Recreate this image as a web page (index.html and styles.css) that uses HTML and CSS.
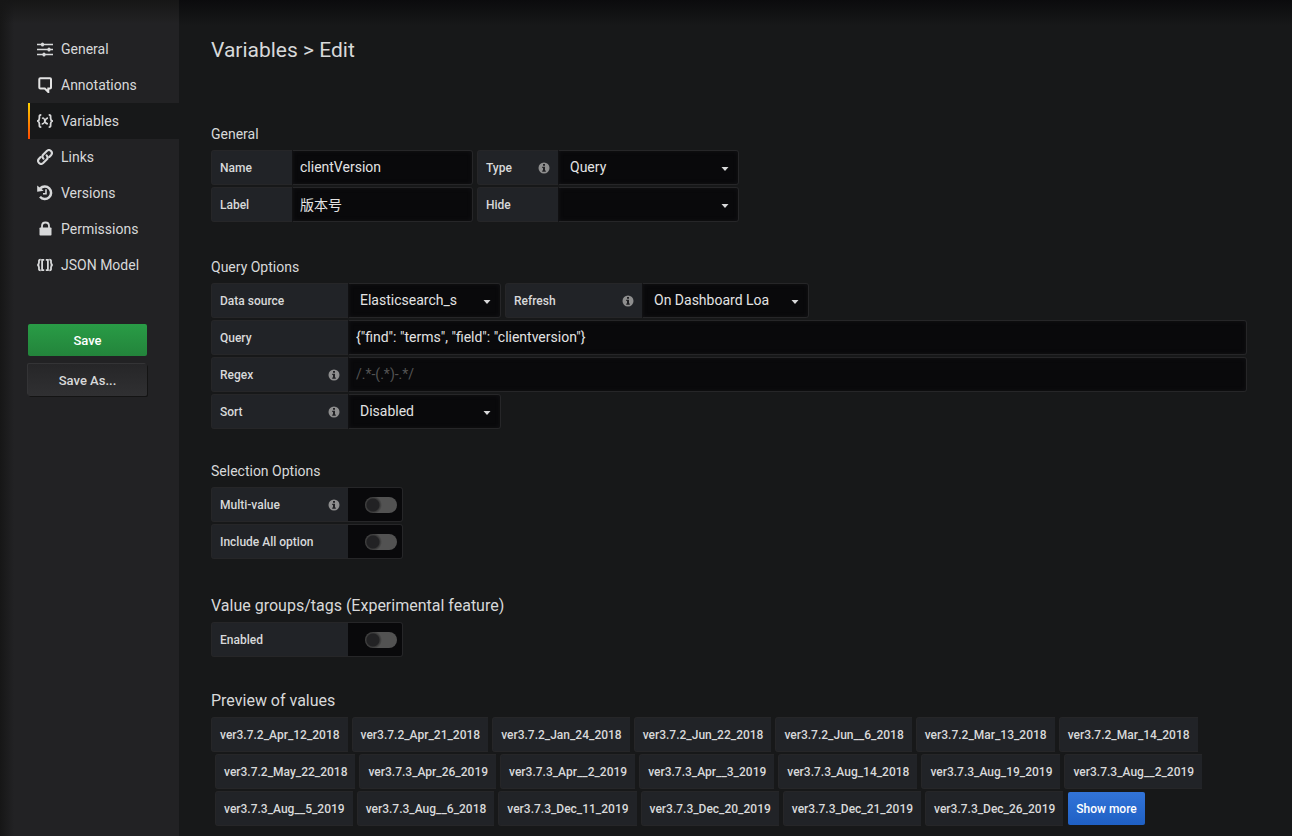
FILE: index.html
```
<!DOCTYPE html>
<html lang="en">
<head>
<meta charset="utf-8">
<title>Variables</title>
<link rel="stylesheet" href="styles.css">
</head>
<body>
<svg class="defs" aria-hidden="true">
  <symbol id="info" viewBox="0 0 12 12"><circle cx="6" cy="6" r="5.500" fill="#8e8e8e"/><path d="M5 2h2v1.700H5zM4.200 4.700H7v3.700h.8v1.300H4.200V8.400H5V6h-.8z" fill="#212124"/></symbol>
  <symbol id="caret" viewBox="0 0 8 4"><path d="M.5 0h7L4 4z" fill="#d8d9da"/></symbol>
</svg>
<div class="settings">
  <aside class="sidebar">
    <nav class="nav">
      <a class="nav-item" href="#general"><svg class="nav-icon" viewBox="0 0 16 16"><path d="M0 3.500h16M0 8.500h16M0 13.500h16" stroke="#d8d9da" stroke-width="1.400"/><path d="M5.500 3v1M12 8v1M7 13v1" stroke="#d8d9da" stroke-width="3" stroke-linecap="round"/></svg>General</a>
      <a class="nav-item" href="#annotations"><svg class="nav-icon" viewBox="0 0 16 16"><path d="M3.300 1.200h9.700q1 0 1 1v8.300q0 1-1 1h-1.700v3.500l-3.500-3.500H3.300q-1 0-1-1V2.200q0-1 1-1z" fill="none" stroke="#e3e3e3" stroke-width="2"/></svg>Annotations</a>
      <a class="nav-item active" href="#variables"><svg class="nav-icon" viewBox="0 0 16 16"><g fill="none" stroke="#d8d9da"><path d="M4.300 1.800C2 1.800 2.400 3 2.400 5S2.200 7.500.5 8c1.700.5 1.900 1 1.900 3s-.4 3.200 1.900 3.200M11.700 1.800c2.300 0 1.900 1.200 1.900 3.200s.2 2.500 1.900 3c-1.700.5-1.900 1-1.900 3s.4 3.200-1.900 3.200" stroke-width="1.800"/><path d="M5 5.500Q7 4 7.700 7.500T11 10.800M11 5Q9 5 8 8T4.700 11" stroke-width="1.400"/></g></svg>Variables</a>
      <a class="nav-item" href="#links"><svg class="nav-icon" viewBox="0 0 16 16"><g fill="none" stroke="#d8d9da" stroke-width="2.100" stroke-linecap="round"><path d="M6.400 9.700C5 8 5.200 6.500 6.300 5.400L9.800 2c2.900-2.600 6.800 1.200 4.200 4.200L12.300 8"/><path d="M9.600 6.300c1.400 1.700 1.200 3.200.1 4.300L6.200 14c-2.900 2.600-6.800-1.200-4.200-4.200L3.700 8"/></g></svg>Links</a>
      <a class="nav-item" href="#versions"><svg class="nav-icon" viewBox="0 0 16 16"><path d="M3.200 3.400A6.300 6.300 0 1 1 3 11.800" fill="none" stroke="#d8d9da" stroke-width="2.500"/><path d="M.2.500v6.300l6.500-1z" fill="#d8d9da"/><path d="M9 4.300v4.400H6" fill="none" stroke="#d8d9da" stroke-width="1.600"/></svg>Versions</a>
      <a class="nav-item" href="#permissions"><svg class="nav-icon" viewBox="0 0 16 16"><rect x="2.500" y="6.500" width="12" height="8" rx=".8" fill="#d8d9da"/><path d="M5 7V5c0-4.700 7-4.700 7 0v2" fill="none" stroke="#d8d9da" stroke-width="1.800"/></svg>Permissions</a>
      <a class="nav-item" href="#json"><svg class="nav-icon" viewBox="0 0 16 16"><g fill="none" stroke="#d8d9da" stroke-width="1.800"><path d="M3.700 2.700C1.500 2.700 2 4 2 5.500S1.800 7.700.4 8C1.800 8.300 2 9 2 10.500s-.5 2.800 1.700 2.800M12.300 2.700c2.200 0 1.700 1.300 1.700 2.800s.2 2.200 1.600 2.500c-1.400.3-1.600 1-1.600 2.500s.5 2.800-1.700 2.800"/><path d="M7.200 2.800H5.100v10.400h2.100M8.800 2.800h2.100v10.400H8.800"/></g></svg>JSON Model</a>
    </nav>
    <div class="actions">
      <button class="btn save" type="button">Save</button>
      <button class="btn save-as" type="button">Save As...</button>
    </div>
  </aside>

  <main class="content">
    <h1 class="title">Variables &gt; Edit</h1>
    <form>
      <section class="group general">
        <h2 class="heading">General</h2>
        <div class="row">
          <div class="field"><label class="label short" for="name">Name</label><input class="input medium" id="name" type="text" value="clientVersion"></div>
          <div class="field"><label class="label short" for="type">Type<svg class="info"><use href="#info"/></svg></label><div class="select medium"><select class="input" id="type"><option>Query</option></select><svg class="caret"><use href="#caret"/></svg></div></div>
        </div>
        <div class="row">
          <div class="field"><label class="label short" for="label">Label</label><input class="input medium" id="label" type="text" value="版本号"></div>
          <div class="field"><label class="label short" for="hide">Hide</label><div class="select medium"><select class="input" id="hide"><option></option></select><svg class="caret"><use href="#caret"/></svg></div></div>
        </div>
      </section>

      <section class="group query">
        <h2 class="heading">Query Options</h2>
        <div class="row">
          <div class="field"><label class="label" for="source">Data source</label><div class="select small"><select class="input" id="source"><option>Elasticsearch_s</option></select><svg class="caret"><use href="#caret"/></svg></div></div>
          <div class="field"><label class="label" for="refresh">Refresh<svg class="info"><use href="#info"/></svg></label><div class="select refresh"><select class="input" id="refresh"><option>On Dashboard Loa</option></select><svg class="caret"><use href="#caret"/></svg></div></div>
        </div>
        <div class="row"><div class="field grow"><label class="label" for="query">Query</label><input class="input" id="query" type="text" value="{&quot;find&quot;: &quot;terms&quot;, &quot;field&quot;: &quot;clientversion&quot;}"></div></div>
        <div class="row"><div class="field grow"><label class="label" for="regex">Regex<svg class="info"><use href="#info"/></svg></label><input class="input" id="regex" type="text" placeholder="/.*-(.*)-.*/"></div></div>
        <div class="row"><div class="field"><label class="label" for="sort">Sort<svg class="info"><use href="#info"/></svg></label><div class="select small"><select class="input" id="sort"><option>Disabled</option></select><svg class="caret"><use href="#caret"/></svg></div></div></div>
      </section>

      <section class="group selection">
        <h2 class="heading">Selection Options</h2>
        <div class="row"><div class="field"><label class="label" for="multi">Multi-value<svg class="info"><use href="#info"/></svg></label><div class="switch"><input class="toggle" id="multi" type="checkbox"></div></div></div>
        <div class="row"><div class="field"><label class="label" for="all">Include All option</label><div class="switch"><input class="toggle" id="all" type="checkbox"></div></div></div>
      </section>

      <section class="group tags">
        <h2 class="heading large">Value groups/tags (Experimental feature)</h2>
        <div class="row"><div class="field"><label class="label" for="enabled">Enabled</label><div class="switch"><input class="toggle" id="enabled" type="checkbox"></div></div></div>
      </section>

      <section class="group">
        <h2 class="heading large">Preview of values</h2>
        <div class="values">
          <span class="value">ver3.7.2_Apr_12_2018</span>
          <span class="value">ver3.7.2_Apr_21_2018</span>
          <span class="value">ver3.7.2_Jan_24_2018</span>
          <span class="value">ver3.7.2_Jun_22_2018</span>
          <span class="value">ver3.7.2_Jun__6_2018</span>
          <span class="value">ver3.7.2_Mar_13_2018</span>
          <span class="value">ver3.7.2_Mar_14_2018</span>
          <span class="value">ver3.7.2_May_22_2018</span>
          <span class="value">ver3.7.3_Apr_26_2019</span>
          <span class="value">ver3.7.3_Apr__2_2019</span>
          <span class="value">ver3.7.3_Apr__3_2019</span>
          <span class="value">ver3.7.3_Aug_14_2018</span>
          <span class="value">ver3.7.3_Aug_19_2019</span>
          <span class="value">ver3.7.3_Aug__2_2019</span>
          <span class="value">ver3.7.3_Aug__5_2019</span>
          <span class="value">ver3.7.3_Aug__6_2018</span>
          <span class="value">ver3.7.3_Dec_11_2019</span>
          <span class="value">ver3.7.3_Dec_20_2019</span>
          <span class="value">ver3.7.3_Dec_21_2019</span>
          <span class="value">ver3.7.3_Dec_26_2019</span>
          <button class="more" type="button">Show more</button>
        </div>
      </section>
    </form>
  </main>
</div>
</body>
</html>
```
FILE: styles.css
```
* { box-sizing: border-box; }
body {
  margin: 0;
  background: #171819;
  color: #d8d9da;
  font: 14px/20px Roboto, "Noto Sans CJK SC", sans-serif;
}
.defs { display: none; }
.settings {
  display: flex;
  min-height: 100vh;
}
.sidebar {
  flex: none;
  width: 179px;
  padding: 31px 0 0 28px;
  background:
    linear-gradient(to bottom, #161616, transparent 24px),
    linear-gradient(to right, #161616, transparent 14px),
    #222224;
}
.nav { display: flex; flex-direction: column; }
.nav-item {
  display: flex;
  align-items: center;
  gap: 8px;
  height: 36px;
  padding-left: 9px;
  color: #d8d9da;
  text-decoration: none;
}
.nav-item.active {
  padding-left: 7px;
  border-left: 2px solid;
  border-image: linear-gradient(#ffd500, #ff4400) 1;
  background: #171819;
}
.nav-icon { flex: none; width: 16px; height: 16px; }
.actions {
  display: flex;
  flex-direction: column;
  gap: 8px;
  width: 119px;
  margin-top: 41px;
}
.btn {
  height: 32px;
  padding: 2px 0 0;
  border: 0;
  border-radius: 2px;
  font: 500 13px/20px Roboto, sans-serif;
}
.save { background: linear-gradient(#299c46, #23843b); color: #fff; }
.save-as {
  background: linear-gradient(#262628, #303032);
  box-shadow: -1px -1px 0 #343436, 1px 1px 0 #141414;
  color: #d8d9da;
}
.content {
  flex: 1;
  min-width: 0;
  padding: 36px 45px 8px 32px;
  background: linear-gradient(to bottom, #0b0b0d, #171819 26px);
}
.title {
  margin: 0 0 60px;
  font-size: 21px;
  line-height: 28px;
  font-weight: 400;
}
.heading {
  margin: 0 0 6px;
  font-size: 14px;
  line-height: 20px;
  font-weight: 400;
}
.heading.large { margin-bottom: 4px; font-size: 16px; line-height: 24px; }
.general { margin-bottom: 35px; }
.query { margin-bottom: 32px; }
.selection { margin-bottom: 35px; }
.tags { margin-bottom: 32px; }
.row { display: flex; gap: 4px; }
.row + .row { margin-top: 2px; }
.field { display: flex; }
.grow { flex: 1; }
.label {
  display: flex;
  flex: none;
  align-items: center;
  justify-content: space-between;
  width: 137px;
  height: 35px;
  padding: 0 8px;
  border: 1px solid #262628;
  border-right: 0;
  border-radius: 3px 0 0 3px;
  background: #212327;
  font-size: 12px;
  font-weight: 500;
}
.label.short { width: 81px; }
.info { width: 12px; height: 12px; }
.input {
  width: 100%;
  height: 35px;
  padding: 0 7px 2px;
  border: 1px solid #262628;
  border-left-color: #101012;
  border-radius: 0 3px 3px 0;
  outline: 0;
  background: #09090b;
  box-shadow: inset 0 0 4px #141416;
  color: #e3e3e3;
  font: 14px/20px Roboto, "Noto Sans CJK SC", sans-serif;
}
.input::placeholder { color: #545454; }
.medium { width: 181px; }
.small { width: 153px; }
.refresh { width: 167px; }
.select { position: relative; }
select.input { appearance: none; padding: 0 28px 2px 11px; }
.caret {
  position: absolute;
  right: 10px;
  top: 17px;
  width: 8px;
  height: 4px;
  pointer-events: none;
}
.switch {
  display: flex;
  align-items: center;
  justify-content: flex-end;
  width: 55px;
  height: 35px;
  padding-right: 5px;
  border: 1px solid #262628;
  border-left: 0;
  border-radius: 0 3px 3px 0;
  background: #09090b;
}
.toggle {
  appearance: none;
  width: 32px;
  height: 16px;
  margin: 0;
  border-radius: 8px;
  background: radial-gradient(circle at 8px 8px, #222224 6px, #3a3a3a 7px, #525252 9px);
}
.values {
  display: flex;
  flex-wrap: wrap;
  row-gap: 2px;
}
.value {
  height: 35px;
  margin-left: 4px;
  padding: 1px 8px 0;
  border: 1px solid #262628;
  border-right: 0;
  border-radius: 3px 0 0 3px;
  background: #212327;
  font-size: 12px;
  line-height: 33px;
  font-weight: 500;
}
.value:first-child { margin-left: 0; }
.more {
  height: 33px;
  margin: 1px 0 0 5px;
  padding: 0 8px;
  border: 0;
  border-radius: 2px;
  background: linear-gradient(#3274d9, #1f60c4);
  color: #fff;
  font: 500 12px/20px Roboto, sans-serif;
}
```
